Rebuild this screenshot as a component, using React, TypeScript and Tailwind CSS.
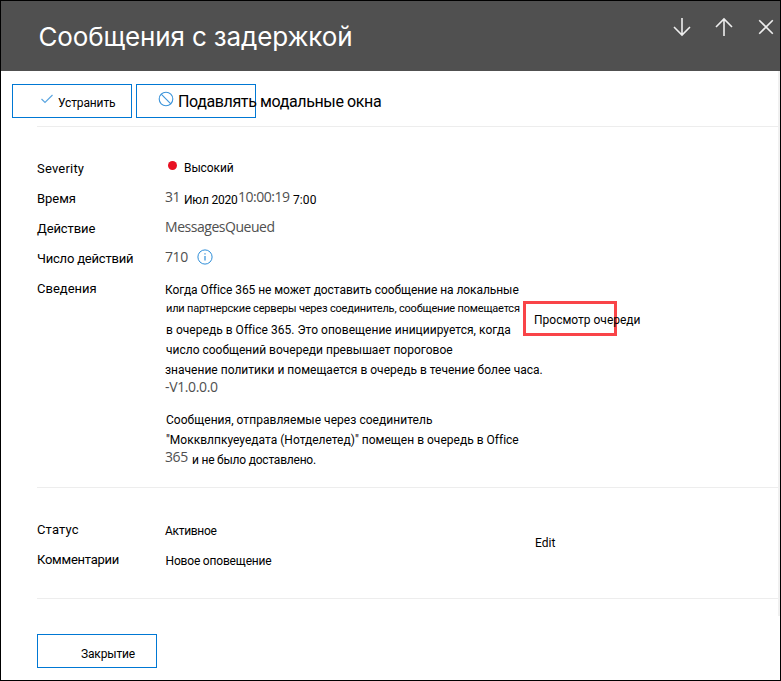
import type { ReactNode } from "react";

function Label({ children, className = "" }: { children: ReactNode; className?: string }) {
  return (
    <div className={`w-32 shrink-0 pt-[5px] text-[13px] leading-5 text-black ${className}`}>{children}</div>
  );
}

function Row({ children }: { children: ReactNode }) {
  return <div className="flex h-[30px] items-start">{children}</div>;
}

function Divider() {
  return <div className="ml-9 h-px shrink-0 bg-[#ededed]" />;
}

const gray = "font-['Open_Sans',sans-serif] text-sm leading-5 text-[#505050]";

export default function App() {
  return (
    <div className="flex h-[681px] w-[781px] flex-col overflow-hidden whitespace-nowrap border border-black bg-white font-['Roboto',sans-serif] text-xs leading-5 text-black">
      <header className="flex h-[70px] shrink-0 justify-between bg-[#505050] pl-[37.5px] pr-1 text-white">
        <h1 className="pt-4 font-['Inter',sans-serif] text-[26px] leading-10 tracking-[-0.13px]">Сообщения с задержкой</h1>
        <div className="flex gap-[22px] pt-4">
          <svg width="20" height="20" viewBox="0 0 20 20" fill="none" stroke="#eeeeee" strokeWidth="1.6">
            <path d="M10 1v17M2 10l8 8 8-8" />
          </svg>
          <svg width="20" height="20" viewBox="0 0 20 20" fill="none" stroke="#eeeeee" strokeWidth="1.6">
            <path d="M10 19V2M2 10l8-8 8 8" />
          </svg>
          <svg width="20" height="20" viewBox="0 0 20 20" fill="none" stroke="#eeeeee" strokeWidth="1.6">
            <path d="M3.2 3.2l13.6 13.6M16.8 3.2L3.2 16.8" />
          </svg>
        </div>
      </header>

      <div className="flex h-[609px]">
        <main className="flex w-[777px] shrink-0 flex-col">
          <div className="flex h-[55px] shrink-0 gap-1 pl-[11px] pt-[13px]">
            <button className="flex h-[34px] w-[120px] items-start border border-[#0078d4] pl-7">
              <svg className="mt-[9px] shrink-0" width="13" height="12" viewBox="0 0 13 12" fill="none" stroke="#5ca6e0" strokeWidth="1.2">
                <path d="M.5 5l3.5 3.5L11.5 1" />
              </svg>
              <span className="ml-1 pt-2 tracking-[-0.13px]">Устранить</span>
            </button>
            <button className="flex h-[34px] w-[120px] items-start border border-[#0078d4] pl-[21px]">
              <svg className="mt-[6px] shrink-0" width="16" height="16" viewBox="0 0 16 16" fill="none" stroke="#3b94da" strokeWidth="1.1">
                <circle cx="8" cy="8" r="6.8" />
                <path d="M3.2 3.2l9.6 9.6" />
              </svg>
              <span className="ml-1 pt-[7px] text-base leading-5 tracking-[-0.38px]">Подавлять модальные окна</span>
            </button>
          </div>
          <Divider />

          <section className="h-[360px] shrink-0 pl-9 pt-[27px]">
            <Row>
              <Label className="tracking-[0.2px]">Severity</Label>
              <span className="ml-[2.5px] mt-[6.5px] size-[9px] rounded-full bg-[#e81123]" />
              <span className="ml-[7.5px] pt-1 tracking-[-0.1px]">Высокий</span>
            </Row>
            <Row>
              <Label className="tracking-[-0.05px]">Время</Label>
              <span className={`w-[19px] pt-[3px] tracking-[-0.5px] ${gray}`}>31</span>
              <span className="w-[54px] pt-1.5 tracking-[-0.2px]">Июл 2020</span>
              <span className={`w-[55px] pt-[3px] tracking-[-0.5px] ${gray}`}>10:00:19</span>
              <span className="pt-1.5 tracking-[0.1px]">7:00</span>
            </Row>
            <Row>
              <Label className="tracking-[-0.1px]">Действие</Label>
              <span className={`pt-[3px] tracking-[-0.46px] ${gray}`}>MessagesQueued</span>
            </Row>
            <Row>
              <Label className="tracking-[-0.2px]">Число действий</Label>
              <span className={`w-8 pt-[3px] tracking-[-0.4px] ${gray}`}>710</span>
              <svg className="mt-[4.5px]" width="16" height="16" viewBox="0 0 16 16" fill="none" stroke="#2f8ed8" strokeWidth="1">
                <circle cx="8" cy="8" r="7.1" />
                <path d="M8 7v4.5M8 4.2v1.3" strokeWidth="1.2" />
              </svg>
            </Row>
            <div className="flex items-start">
              <Label>Сведения</Label>
              <div className="flex w-[358px] shrink-0 flex-col pt-1.5">
                <p className="tracking-[-0.06px]">Когда Office 365 не может доставить сообщение на локальные</p>
                <p className="-mt-px pl-px text-[11px] leading-5 tracking-[-0.19px]">или партнерские серверы через соединитель, сообщение помещается</p>
                <p className="mt-px pl-px tracking-[0.03px]">в очередь в Office 365. Это оповещение инициируется, когда</p>
                <p className="pl-px">число сообщений вочереди превышает пороговое</p>
                <p className="tracking-[0.01px]">значение политики и помещается в очередь в течение более часа.</p>
                <p className={`-mt-[3px] tracking-[-0.36px] ${gray}`}>-V1.0.0.0</p>
                <p className="mt-[13px] pl-px tracking-[0.04px]">Сообщения, отправляемые через соединитель</p>
                <p className="pl-px tracking-[0.01px]">"Мокквлпкуеуедата (Нотделетед)" помещен в очередь в Office</p>
                <div className="flex">
                  <span className={`-mt-[3px] w-[27px] tracking-[-0.4px] ${gray}`}>365</span>
                  <span className="tracking-[-0.22px]">и не было доставлено.</span>
                </div>
              </div>
              <a className="mt-[27px] block h-[35px] w-[94px] border-[3px] border-[#f94448] pl-2 pt-1.5">Просмотр очереди</a>
            </div>
          </section>
          <Divider />

          <section className="flex h-[110px] shrink-0 pl-9 pt-[27px]">
            <div className="w-[498px]">
              <Row>
                <Label className="tracking-[0.15px]">Статус</Label>
                <span className="pt-1.5 tracking-[-0.3px]">Активное</span>
              </Row>
              <Row>
                <Label className="tracking-[-0.25px]">Комментарии</Label>
                <span className="pl-[0.5px] pt-1.5 tracking-[-0.18px]">Новое оповещение</span>
              </Row>
            </div>
            <a className="pt-[18px]">Edit</a>
          </section>
          <Divider />

          <footer className="pl-9 pt-[35px]">
            <button className="block h-[34px] w-[120px] border border-[#0078d4] pl-[43px] pt-1.5 text-left tracking-[-0.15px]">Закрытие</button>
          </footer>
        </main>
        <div className="h-[545px] w-0.5 bg-[#f0f0f0]" />
      </div>
    </div>
  );
}
